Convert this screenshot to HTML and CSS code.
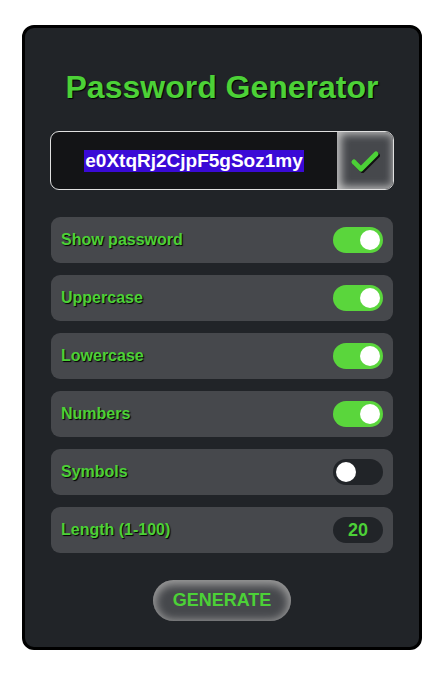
FILE: index.html
```html
<!DOCTYPE html>
<html>
<head>
<meta charset="utf-8">
<link rel="stylesheet" href="styles.css">
</head>
<body>
<div class="card">
  <h1 class="title">Password Generator</h1>
  <div class="pw-box">
    <div class="pw-field"><span class="pw-text">e0XtqRj2CjpF5gSoz1my</span></div>
    <div class="pw-btn">
      <svg width="30" height="24" viewBox="0 0 30 24">
        <path d="M4 13 L11 20 L26 5" fill="none" stroke="#111" stroke-width="5" stroke-linecap="round" stroke-linejoin="round" transform="translate(1.5,1.5)"/>
        <path d="M4 13 L11 20 L26 5" fill="none" stroke="#4cd137" stroke-width="5" stroke-linecap="round" stroke-linejoin="round"/>
      </svg>
    </div>
  </div>
  <div class="rows">
    <div class="row"><span class="label">Show password</span><span class="toggle on"><span class="knob"></span></span></div>
    <div class="row"><span class="label">Uppercase</span><span class="toggle on"><span class="knob"></span></span></div>
    <div class="row"><span class="label">Lowercase</span><span class="toggle on"><span class="knob"></span></span></div>
    <div class="row"><span class="label">Numbers</span><span class="toggle on"><span class="knob"></span></span></div>
    <div class="row"><span class="label">Symbols</span><span class="toggle"><span class="knob"></span></span></div>
    <div class="row"><span class="label">Length (1-100)</span><span class="num">20</span></div>
  </div>
  <div class="actions"><button class="gen">GENERATE</button></div>
</div>
</body>
</html>
```
FILE: styles.css
```css
* { box-sizing: border-box; }
html, body { margin: 0; padding: 0; background: #fff; }
body { font-family: "Liberation Sans", Arial, sans-serif; padding-top: 25px; }
.card {
  width: 400px;
  height: 625px;
  margin: 0 0 0 22px;
  background: #212428;
  border: 3px solid #000;
  border-radius: 12px;
  padding: 0 25px;
  display: flex;
  flex-direction: column;
}
.title {
  margin: 40px 0 0;
  height: 38px;
  line-height: 38px;
  font-size: 32px;
  font-weight: bold;
  color: #4cd137;
  text-align: center;
  text-shadow: 1px 1px 1px #000;
}
.pw-box {
  margin-top: 25px;
  height: 59px;
  border: 1px solid #e0e0e0;
  border-radius: 9px;
  background: #131416;
  display: flex;
  overflow: hidden;
}
.pw-field {
  flex: 1;
  display: flex;
  align-items: center;
  justify-content: center;
}
.pw-text {
  color: #fff;
  font-size: 19px;
  font-weight: bold;
  background: #3a0ad6;
  line-height: 22px;
  padding: 0 1px;
}
.pw-btn {
  width: 56px;
  background: #46484c;
  box-shadow: inset 2px 0 8px 2px #c4c4c4;
  display: flex;
  align-items: center;
  justify-content: center;
}
.rows {
  margin-top: 27px;
  display: flex;
  flex-direction: column;
  gap: 12px;
  padding: 0 1px;
}
.row {
  height: 46px;
  background: #46484c;
  border-radius: 9px;
  display: flex;
  align-items: center;
  justify-content: space-between;
  padding: 0 10px;
}
.label {
  color: #4cd137;
  font-size: 16px;
  font-weight: bold;
  text-shadow: 1px 1px 1px #000;
}
.toggle {
  width: 50px;
  height: 26px;
  border-radius: 13px;
  background: #212428;
  display: flex;
  align-items: center;
  padding: 0 3px;
}
.toggle.on { background: #5ad63c; justify-content: flex-end; }
.knob {
  width: 20px;
  height: 20px;
  border-radius: 50%;
  background: #fff;
}
.num {
  width: 50px;
  height: 26px;
  border-radius: 13px;
  background: #212428;
  color: #4cd137;
  font-size: 18px;
  font-weight: bold;
  text-align: center;
  line-height: 26px;
}
.actions {
  margin-top: 27px;
  display: flex;
  justify-content: center;
}
.gen {
  width: 138px;
  height: 41px;
  border: none;
  border-radius: 21px;
  background: #46484c;
  box-shadow: inset 0 2px 9px 3px #9a9a9a;
  color: #4cd137;
  font-family: "Liberation Sans", Arial, sans-serif;
  font-size: 18px;
  font-weight: bold;
  padding: 0;
}
```
